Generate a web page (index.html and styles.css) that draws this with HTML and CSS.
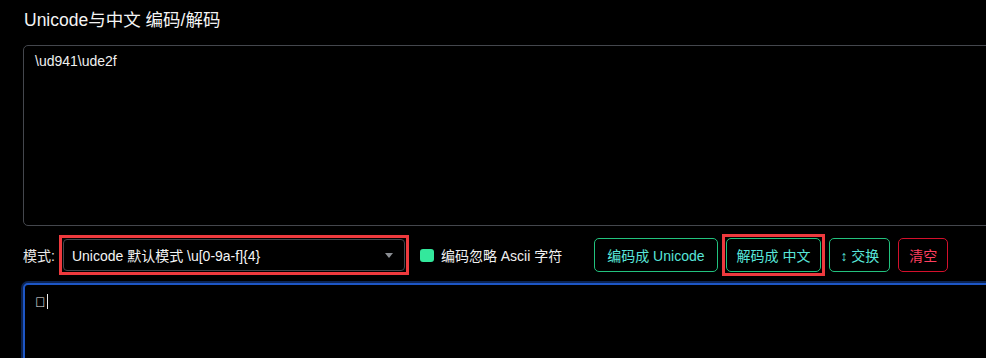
FILE: index.html
```html
<!DOCTYPE html>
<html lang="zh-CN">
<head>
<meta charset="utf-8">
<title>Unicode与中文 编码/解码</title>
<link rel="stylesheet" href="styles.css">
</head>
<body>
<div class="page">
  <h1 class="title">Unicode与中文 编码/解码</h1>
  <div class="textbox source">\ud941\ude2f</div>
  <div class="toolbar">
    <span class="mode-label">模式:</span>
    <span class="mark">
      <span class="select">
        <span class="select-text">Unicode 默认模式 \u[0-9a-f]{4}</span>
        <span class="select-arrow"></span>
      </span>
    </span>
    <label class="check">
      <span class="check-box"></span>
      <span class="check-text">编码忽略 Ascii 字符</span>
    </label>
    <div class="actions">
      <button class="btn btn-wide">编码成 Unicode</button>
      <span class="mark"><button class="btn">解码成 中文</button></span>
      <button class="btn">↕ 交换</button>
      <button class="btn btn-danger">清空</button>
    </div>
  </div>
  <div class="textbox result focused"><span class="tofu">&#x6062F;</span><span class="caret"></span></div>
</div>
</body>
</html>
```
FILE: styles.css
```css
html, body {
  margin: 0;
  padding: 0;
  background: #000;
  overflow: hidden;
}
body {
  font-family: "Liberation Sans", "Noto Sans CJK SC", sans-serif;
  color: #f2f2f2;
  width: 986px;
  height: 358px;
}
.page {
  width: 1200px;
  padding: 8px 0 0 23px;
}
.title {
  margin: 0 0 13px 1px;
  font-size: 17.5px;
  font-weight: normal;
  line-height: 24px;
  color: #f4f4f4;
}
.textbox {
  box-sizing: border-box;
  border: 1px solid #44474d;
  border-radius: 5px;
  background: #000;
  font-size: 14px;
  line-height: 18px;
  padding: 6px 11px;
  color: #f0f0f0;
}
.source {
  height: 181px;
}
.result {
  height: 120px;
  display: flex;
  align-items: flex-start;
}
.focused {
  border: 2px solid #1d56c6;
  box-shadow: 0 0 0 2px #0c2350;
  padding: 8px 10px;
}
.toolbar {
  display: flex;
  align-items: center;
  height: 34px;
  margin: 12px 0 11px;
  font-size: 14px;
}
.mode-label {
  color: #e8e8e8;
  margin-right: 8px;
}
.mark {
  display: inline-flex;
  outline: 3px solid #ee3a3e;
  outline-offset: 1px;
}
.select {
  box-sizing: border-box;
  width: 342px;
  height: 32px;
  border: 1px solid #44474d;
  border-radius: 4px;
  display: flex;
  align-items: center;
  justify-content: space-between;
  padding: 0 8px 0 8px;
  color: #f4f4f4;
}
.select-arrow {
  width: 0;
  height: 0;
  border-left: 4px solid transparent;
  border-right: 4px solid transparent;
  border-top: 5px solid #8a8d92;
  margin-right: 3px;
}
.check {
  display: flex;
  align-items: center;
  margin-left: 15px;
}
.check-box {
  width: 14px;
  height: 13px;
  background: #33e89c;
  border-radius: 3px;
  margin-right: 7px;
}
.check-text {
  color: #f0f0f0;
}
.actions {
  display: flex;
  align-items: center;
  gap: 8px;
  margin-left: 32px;
}
.btn {
  box-sizing: border-box;
  height: 34px;
  padding: 0 10px;
  background: #000;
  border: 1px solid #22c27e;
  border-radius: 5px;
  color: #58e6da;
  font-family: "Liberation Sans", "Noto Sans CJK SC", sans-serif;
  font-size: 14px;
}
.btn-wide {
  padding: 0 12px;
}
.btn-danger {
  border-color: #d4102c;
  color: #ff3f5f;
}
.tofu {
  font-size: 14px;
}
.caret {
  display: inline-block;
  width: 1px;
  height: 15px;
  background: #f0f0f0;
  margin-left: 1px;
  margin-top: 1px;
}
```
